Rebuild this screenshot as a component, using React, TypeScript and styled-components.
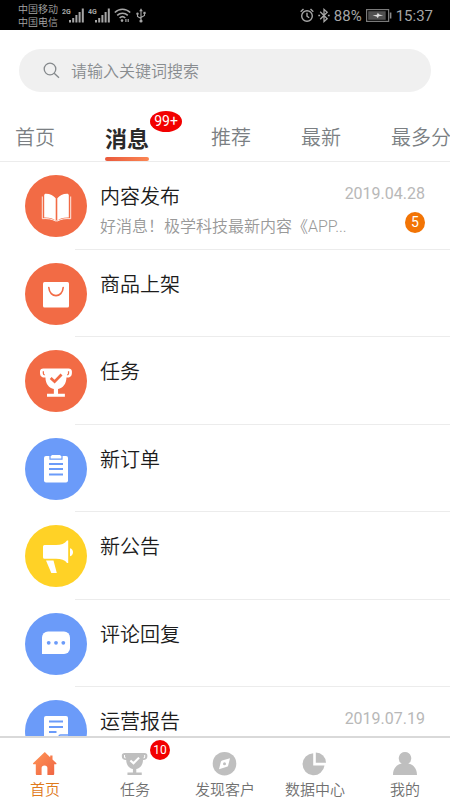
import React from "react";
import styled, { createGlobalStyle } from "styled-components";

const GlobalStyle = createGlobalStyle`
  *, *::before, *::after { box-sizing: border-box; }
  body {
    margin: 0;
    background: #fff;
    font-family: Roboto, "Noto Sans CJK SC", sans-serif;
    font-weight: 350;
  }
  button, input { font: inherit; }
`;

const Screen = styled.div`
  display: flex;
  flex-direction: column;
  height: 100vh;
  overflow: hidden;
`;

const StatusBar = styled.header`
  display: flex;
  align-items: center;
  justify-content: space-between;
  flex: none;
  height: 30px;
  padding: 0 17px 0 18px;
  background: #000;
  color: #a6a6a6;
`;

const StatusGroup = styled.div`
  display: flex;
  align-items: center;
  gap: 4px;
`;

const Carriers = styled.div`
  font-size: 10px;
  line-height: 13px;
  padding-top: 2px;
`;

const StatusText = styled.span`
  font-size: 15px;
  line-height: 30px;
  font-weight: 400;
  padding-top: 2px;
`;

const SearchBox = styled.label`
  display: flex;
  align-items: center;
  gap: 11px;
  flex: none;
  height: 43px;
  margin: 19px 19px 0;
  padding: 0 24px;
  border-radius: 22px;
  background: #f0f0f0;
`;

const SearchInput = styled.input`
  flex: 1;
  min-width: 0;
  padding: 3px 0 0;
  border: 0;
  outline: 0;
  background: transparent;
  color: #333;
  font-size: 16px;
  line-height: 24px;
  &::placeholder { color: #888c8f; opacity: 1; }
`;

const Tabs = styled.nav`
  display: flex;
  align-items: flex-end;
  gap: 50px;
  flex: none;
  height: 70px;
  padding-left: 15px;
  overflow: hidden;
  border-bottom: 1px solid #ececec;
`;

const Tab = styled.button<{ $active?: boolean }>`
  position: relative;
  flex: none;
  height: 51px;
  margin: ${(p) => (p.$active ? "0 12px 0 0" : "0")};
  padding: 2px 0 0;
  border: 0;
  background: none;
  white-space: nowrap;
  color: ${(p) => (p.$active ? "#2a2a2a" : "#7b7f83")};
  font-size: ${(p) => (p.$active ? 22 : 20)}px;
  font-weight: ${(p) => (p.$active ? 700 : 350)};
  &::after {
    content: "";
    display: ${(p) => (p.$active ? "block" : "none")};
    position: absolute;
    left: 0;
    right: 0;
    bottom: 0;
    height: 4px;
    border-radius: 2px;
    background: linear-gradient(90deg, #e9593c, #fb8653);
  }
`;

const Badge = styled.span<{ $wide?: boolean; $color: string }>`
  display: flex;
  align-items: center;
  justify-content: center;
  flex: none;
  width: ${(p) => (p.$wide ? 32 : 20)}px;
  height: 21px;
  border-radius: 50%;
  background: ${(p) => p.$color};
  color: #fff;
  font-size: 14px;
  line-height: 21px;
  font-weight: 400;
`;

const TabBadge = styled(Badge)`
  position: absolute;
  left: 45px;
  top: 1px;
`;

const List = styled.ul`
  flex: 1;
  min-height: 0;
  margin: 0;
  padding: 0;
  list-style: none;
  overflow-y: auto;
  scrollbar-width: none;
`;

const Row = styled.li`
  display: grid;
  grid-template-columns: 62px 1fr;
  column-gap: 13px;
  height: 88px;
  padding: 13px 25px 0;
  background: linear-gradient(#ececec, #ececec) 75px 100% / 100% 1px no-repeat;
  &:nth-child(even) { height: 87px; }
`;

const Avatar = styled.span<{ $color: string }>`
  display: flex;
  width: 62px;
  height: 62px;
  border-radius: 50%;
  background: ${(p) => p.$color};
`;

const RowText = styled.div`
  min-width: 0;
  padding-top: 7px;
`;

const Line = styled.div`
  display: flex;
  justify-content: space-between;
`;

const Title = styled.h2`
  margin: 0;
  color: #1c1c1c;
  font-size: 20px;
  line-height: 30px;
  font-weight: 350;
`;

const When = styled.time`
  color: #b8b8b8;
  font-size: 16px;
  line-height: 24px;
  font-weight: 400;
`;

const Preview = styled.p`
  min-width: 0;
  margin: 3px 0 0;
  overflow: hidden;
  text-overflow: ellipsis;
  white-space: nowrap;
  color: #999;
  font-size: 16px;
  line-height: 24px;
`;

const BottomNav = styled.nav`
  display: grid;
  grid-template-columns: repeat(5, 1fr);
  flex: none;
  height: 64px;
  border-top: 2px solid #d9d9d9;
  background: #fff;
`;

const NavItem = styled.a<{ $active?: boolean }>`
  position: relative;
  display: flex;
  flex-direction: column;
  align-items: center;
  gap: 3px;
  padding-top: 12px;
  text-decoration: none;
  white-space: nowrap;
  color: ${(p) => (p.$active ? "#e07a1c" : "#707070")};
  font-size: 15px;
  line-height: 22px;
`;

const NavBadge = styled(Badge)`
  position: absolute;
  left: 60px;
  top: 2px;
  height: 20px;
  font-size: 12px;
`;

const Signal = ({ label }: { label: string }) => (
  <svg width="22" height="18" viewBox="0 0 22 18" role="img" aria-label={label}>
    <text x="0" y="8" fontSize="7" fontWeight="700" fill="#a6a6a6">{label}</text>
    <path d="M8 14v2.500M11.200 12v4.500M14.400 9v7.500M17.600 6v10.500M20.800 2.500v14" stroke="#a6a6a6" strokeWidth="2" />
  </svg>
);

const Wifi = () => (
  <svg width="17" height="15" viewBox="0 0 17 15" fill="none" stroke="#a6a6a6" strokeWidth="1.5" aria-hidden>
    <path d="M.8 4.6C5 .2 12 .2 16.200 4.600M3.200 7.400c3-3 7.600-3 10.600 0M5.600 10c1.700-1.600 4-1.600 5.700 0" />
    <circle cx="8" cy="12.600" r="1.300" fill="#a6a6a6" stroke="none" />
    <path d="M11.900 11v3M14.200 11v3" strokeWidth="1.200" />
  </svg>
);

const Usb = () => (
  <svg width="12" height="15" viewBox="0 0 10 15" fill="none" stroke="#a6a6a6" strokeWidth="1.100" aria-hidden>
    <path d="M5 2v11M5 10.500L1.500 8.500V6M5 9.500l3.500-2V5" />
    <path d="M3.200 3.200L5 .300l1.800 2.900z" fill="#a6a6a6" stroke="none" />
    <circle cx="5" cy="13" r="1.600" fill="#a6a6a6" stroke="none" />
    <circle cx="1.500" cy="5.800" r="1.200" fill="#a6a6a6" stroke="none" />
    <path d="M7.400 3.800h2.200V6H7.400z" fill="#a6a6a6" stroke="none" />
  </svg>
);

const Alarm = () => (
  <svg width="14" height="15" viewBox="0 0 14 15" fill="none" stroke="#a6a6a6" strokeWidth="1.400" aria-hidden>
    <circle cx="7" cy="8" r="5.300" />
    <path d="M7 4.800v3.400l2.200 1.600M.7 3.800L3.500 1M13.300 3.800L10.500 1" />
  </svg>
);

const Bluetooth = () => (
  <svg width="12" height="15" viewBox="0 0 12 15" fill="none" stroke="#a6a6a6" strokeWidth="1.300" aria-hidden>
    <path d="M2.200 3.800l7 7L6 13.600V1.400l3.200 2.800-7 7" />
    <path d="M.3 7.500h1.800M9.900 7.500h1.800" strokeWidth="1.600" />
  </svg>
);

const Battery = () => (
  <svg width="26" height="13" viewBox="0 0 26 13" aria-hidden>
    <rect x=".6" y=".6" width="22" height="11.800" fill="none" stroke="#7a7a7a" strokeWidth="1.200" />
    <rect x="2.200" y="2.200" width="17.500" height="8.600" fill="#505050" />
    <path d="M6.500 6.500l4.500-.8.8-2 1.400 1.800 4 1-4.500.8-.8 2-1.400-1.800z" fill="#ddd" />
    <path d="M24.600 3.500v6" stroke="#8a8a8a" strokeWidth="1.600" />
  </svg>
);

const SearchIcon = () => (
  <svg width="17" height="17" viewBox="0 0 17 17" fill="none" stroke="#85898c" strokeWidth="1.300" aria-hidden>
    <circle cx="7" cy="7" r="5.800" />
    <path d="M11.200 11.200l4.800 4.500" />
  </svg>
);

const Glyph = ({ children }: { children: React.ReactNode }) => (
  <svg width="62" height="62" viewBox="0 0 62 62" fill="#fff" aria-hidden>{children}</svg>
);

const Trophy = ({ cut }: { cut: string }) => (
  <>
    <path d="M3 0h24c2 0 3.200 1.200 3.200 3v1.500c0 2.800-1.800 4.300-4.800 4.300H25c0 6-3.500 10.400-8 11.200v4.500h6.500v3h-17v-3H13V20C8.500 19.200 5 14.800 5 8.800h-.4C1.600 8.800-.2 7.300-.2 4.500V3C-.2 1.200 1 0 3 0z" />
    <path d="M3 2.600v2c0 1 .5 1.500 1.300 1.600M27 2.600v2c0 1-.5 1.500-1.300 1.600" stroke={cut} strokeWidth="1.200" fill="none" />
    <path d="M10 9.300l3.700 3.500 6.600-7" stroke={cut} strokeWidth="2.600" fill="none" />
  </>
);

const CORAL = "#f26b45";
const BLUE = "#6b9bf9";
const YELLOW = "#ffd226";

const glyphs = {
  book: (
    <Glyph>
      <path d="M30.700 45.800V23.200c-2.200-2.800-5.500-4.400-9.700-4.500-1.200 0-1.800.5-1.800 1.600v22.200c5.400-.2 8.700.8 11.500 3.300zM32.300 45.800V23.200c2.200-2.800 5.500-4.400 9.700-4.500 1.200 0 1.800.5 1.800 1.600v22.200c-5.400-.2-8.700.8-11.500 3.300z" />
      <path d="M17.300 21.500v22.200c5-.4 9.600.2 13 2.200h2.400c3.400-2 8-2.600 13-2.200V21.500" fill="none" stroke="#fff" strokeOpacity=".85" strokeWidth="1" />
    </Glyph>
  ),
  bag: (
    <Glyph>
      <rect x="18" y="19" width="26" height="25.500" rx="1.500" />
      <path d="M23.800 24.500c.8 10.800 13.600 10.800 14.400 0" fill="none" stroke={CORAL} strokeWidth="1.600" strokeLinecap="round" />
    </Glyph>
  ),
  trophy: (
    <Glyph>
      <g transform="translate(15.200 18.500) scale(1.050 1.030)"><Trophy cut={CORAL} /></g>
    </Glyph>
  ),
  order: (
    <Glyph>
      <rect x="19" y="18" width="24" height="26.500" rx="2" />
      <path d="M25 17.500v3.700h12v-3.700" fill="none" stroke={BLUE} strokeWidth="1.200" />
      <rect x="26.500" y="17" width="9" height="3" />
      <path d="M24 26h14M24 31h14M24 36.500h14" stroke={BLUE} strokeWidth="1.900" />
    </Glyph>
  ),
  horn: (
    <Glyph>
      <path d="M19.500 20H31c5 0 9-1.500 11-4.500h1.200v22.500H42c-2-3-6-4.300-11-4.300H19.500a1.500 1.500 0 0 1-1.500-1.500V21.500A1.500 1.500 0 0 1 19.500 20zM21 35.500h7.500l3.300 12.500h-5.500zM45 23.200c4 1 4 7 0 8z" />
    </Glyph>
  ),
  chat: (
    <Glyph>
      <path d="M23 18.500h16a6 6 0 0 1 6 6V35a6 6 0 0 1-6 6H17V24.500a6 6 0 0 1 6-6z" />
      <g fill={BLUE}>
        <circle cx="23.700" cy="29.800" r="1.900" />
        <circle cx="31" cy="29.800" r="1.900" />
        <circle cx="38.300" cy="29.800" r="1.900" />
      </g>
    </Glyph>
  ),
  report: (
    <Glyph>
      <rect x="19" y="16" width="24" height="28" rx="2" />
      <path d="M24 21.500h14M24 27h14M24 32h7.500" stroke={BLUE} strokeWidth="2" />
      <path d="M34 44v-7.500a1.500 1.500 0 0 1 1.500-1.500H43" fill="none" stroke={BLUE} strokeWidth="1.500" />
    </Glyph>
  ),
};

interface Message {
  title: string;
  color: string;
  icon: keyof typeof glyphs;
  date?: string;
  preview?: string;
  unread?: number;
}

const messages: Message[] = [
  { title: "内容发布", color: CORAL, icon: "book", date: "2019.04.28", preview: "好消息！极学科技最新内容《APP...", unread: 5 },
  { title: "商品上架", color: CORAL, icon: "bag" },
  { title: "任务", color: CORAL, icon: "trophy" },
  { title: "新订单", color: BLUE, icon: "order" },
  { title: "新公告", color: YELLOW, icon: "horn" },
  { title: "评论回复", color: BLUE, icon: "chat" },
  { title: "运营报告", color: BLUE, icon: "report", date: "2019.07.19", preview: "", unread: 10 },
];

const NavSvg = ({ children }: { children: React.ReactNode }) => (
  <svg width="28" height="26" viewBox="0 0 28 26" fill="#bfbfbf" aria-hidden>{children}</svg>
);

const navItems = [
  {
    label: "首页",
    icon: (
      <NavSvg>
        <defs>
          <linearGradient id="home" x1="0" y1="0" x2="1" y2="1">
            <stop offset="0" stopColor="#ff9556" />
            <stop offset="1" stopColor="#ef6343" />
          </linearGradient>
        </defs>
        <path d="M13 2.700L2.300 13c-.5.600-.3 1.200.5 1.200h2v9.600c0 .8.400 1.200 1.200 1.200h4.600v-7c0-1.500 1-2.400 2.900-2.400s2.900.9 2.900 2.400v7H22c.8 0 1.200-.4 1.200-1.200v-9.600h1.500c.8 0 1-.6.500-1.200L21.500 9.500V5.500h-2.300v1.800L14.500 2.700c-.5-.5-1-.5-1.500 0z" fill="url(#home)" />
      </NavSvg>
    ),
  },
  { label: "任务", icon: <NavSvg><g transform="translate(1 3) scale(.84 .8)"><Trophy cut="#fff" /></g></NavSvg>, badge: "10" },
  {
    label: "发现客户",
    icon: (
      <NavSvg>
        <circle cx="13.500" cy="13.700" r="11.800" />
        <path d="M19 8.200l-1.800 7.200c-.2.700-.6 1.200-1.300 1.400L8 19.200l1.800-7.200c.2-.7.600-1.200 1.300-1.400z" fill="#fff" />
        <circle cx="13.500" cy="13.700" r="1.500" />
      </NavSvg>
    ),
  },
  {
    label: "数据中心",
    icon: (
      <NavSvg>
        <path d="M12.200 3.200a11 11 0 1 0 11.300 12.300H12.200z" />
        <path d="M14.800 2.400a10.300 10.300 0 0 1 10.200 10.300H14.800z" />
      </NavSvg>
    ),
  },
  {
    label: "我的",
    icon: (
      <NavSvg>
        <path d="M14 2a6.300 6.300 0 0 1 3.300 11.600c5 1 8.700 5 8.700 11.400H2c0-6.400 3.700-10.400 8.700-11.400A6.300 6.300 0 0 1 14 2z" />
      </NavSvg>
    ),
  },
];

const tabs = ["首页", "消息", "推荐", "最新", "最多分享"];

export default function App() {
  return (
    <Screen>
      <GlobalStyle />
      <StatusBar>
        <StatusGroup>
          <Carriers>
            <div>中国移动</div>
            <div>中国电信</div>
          </Carriers>
          <Signal label="2G" />
          <Signal label="4G" />
          <Wifi />
          <Usb />
        </StatusGroup>
        <StatusGroup>
          <Alarm />
          <Bluetooth />
          <StatusText>88%</StatusText>
          <Battery />
          <StatusText>15:37</StatusText>
        </StatusGroup>
      </StatusBar>

      <SearchBox>
        <SearchIcon />
        <SearchInput type="search" placeholder="请输入关键词搜索" aria-label="请输入关键词搜索" />
      </SearchBox>

      <Tabs>
        {tabs.map((name) => (
          <Tab key={name} type="button" $active={name === "消息"}>
            {name}
            {name === "消息" && <TabBadge $wide $color="#f20000">99+</TabBadge>}
          </Tab>
        ))}
      </Tabs>

      <List>
        {messages.map((m) => (
          <Row key={m.title}>
            <Avatar $color={m.color}>{glyphs[m.icon]}</Avatar>
            <RowText>
              <Line>
                <Title>{m.title}</Title>
                {m.date && <When>{m.date}</When>}
              </Line>
              {m.unread && (
                <Line>
                  <Preview>{m.preview}</Preview>
                  <Badge $wide={m.unread > 9} $color="#f27405">{m.unread}</Badge>
                </Line>
              )}
            </RowText>
          </Row>
        ))}
      </List>

      <BottomNav>
        {navItems.map((item, i) => (
          <NavItem key={item.label} href="#" $active={i === 0}>
            {item.icon}
            <span>{item.label}</span>
            {item.badge && <NavBadge $color="#f20000">{item.badge}</NavBadge>}
          </NavItem>
        ))}
      </BottomNav>
    </Screen>
  );
}
